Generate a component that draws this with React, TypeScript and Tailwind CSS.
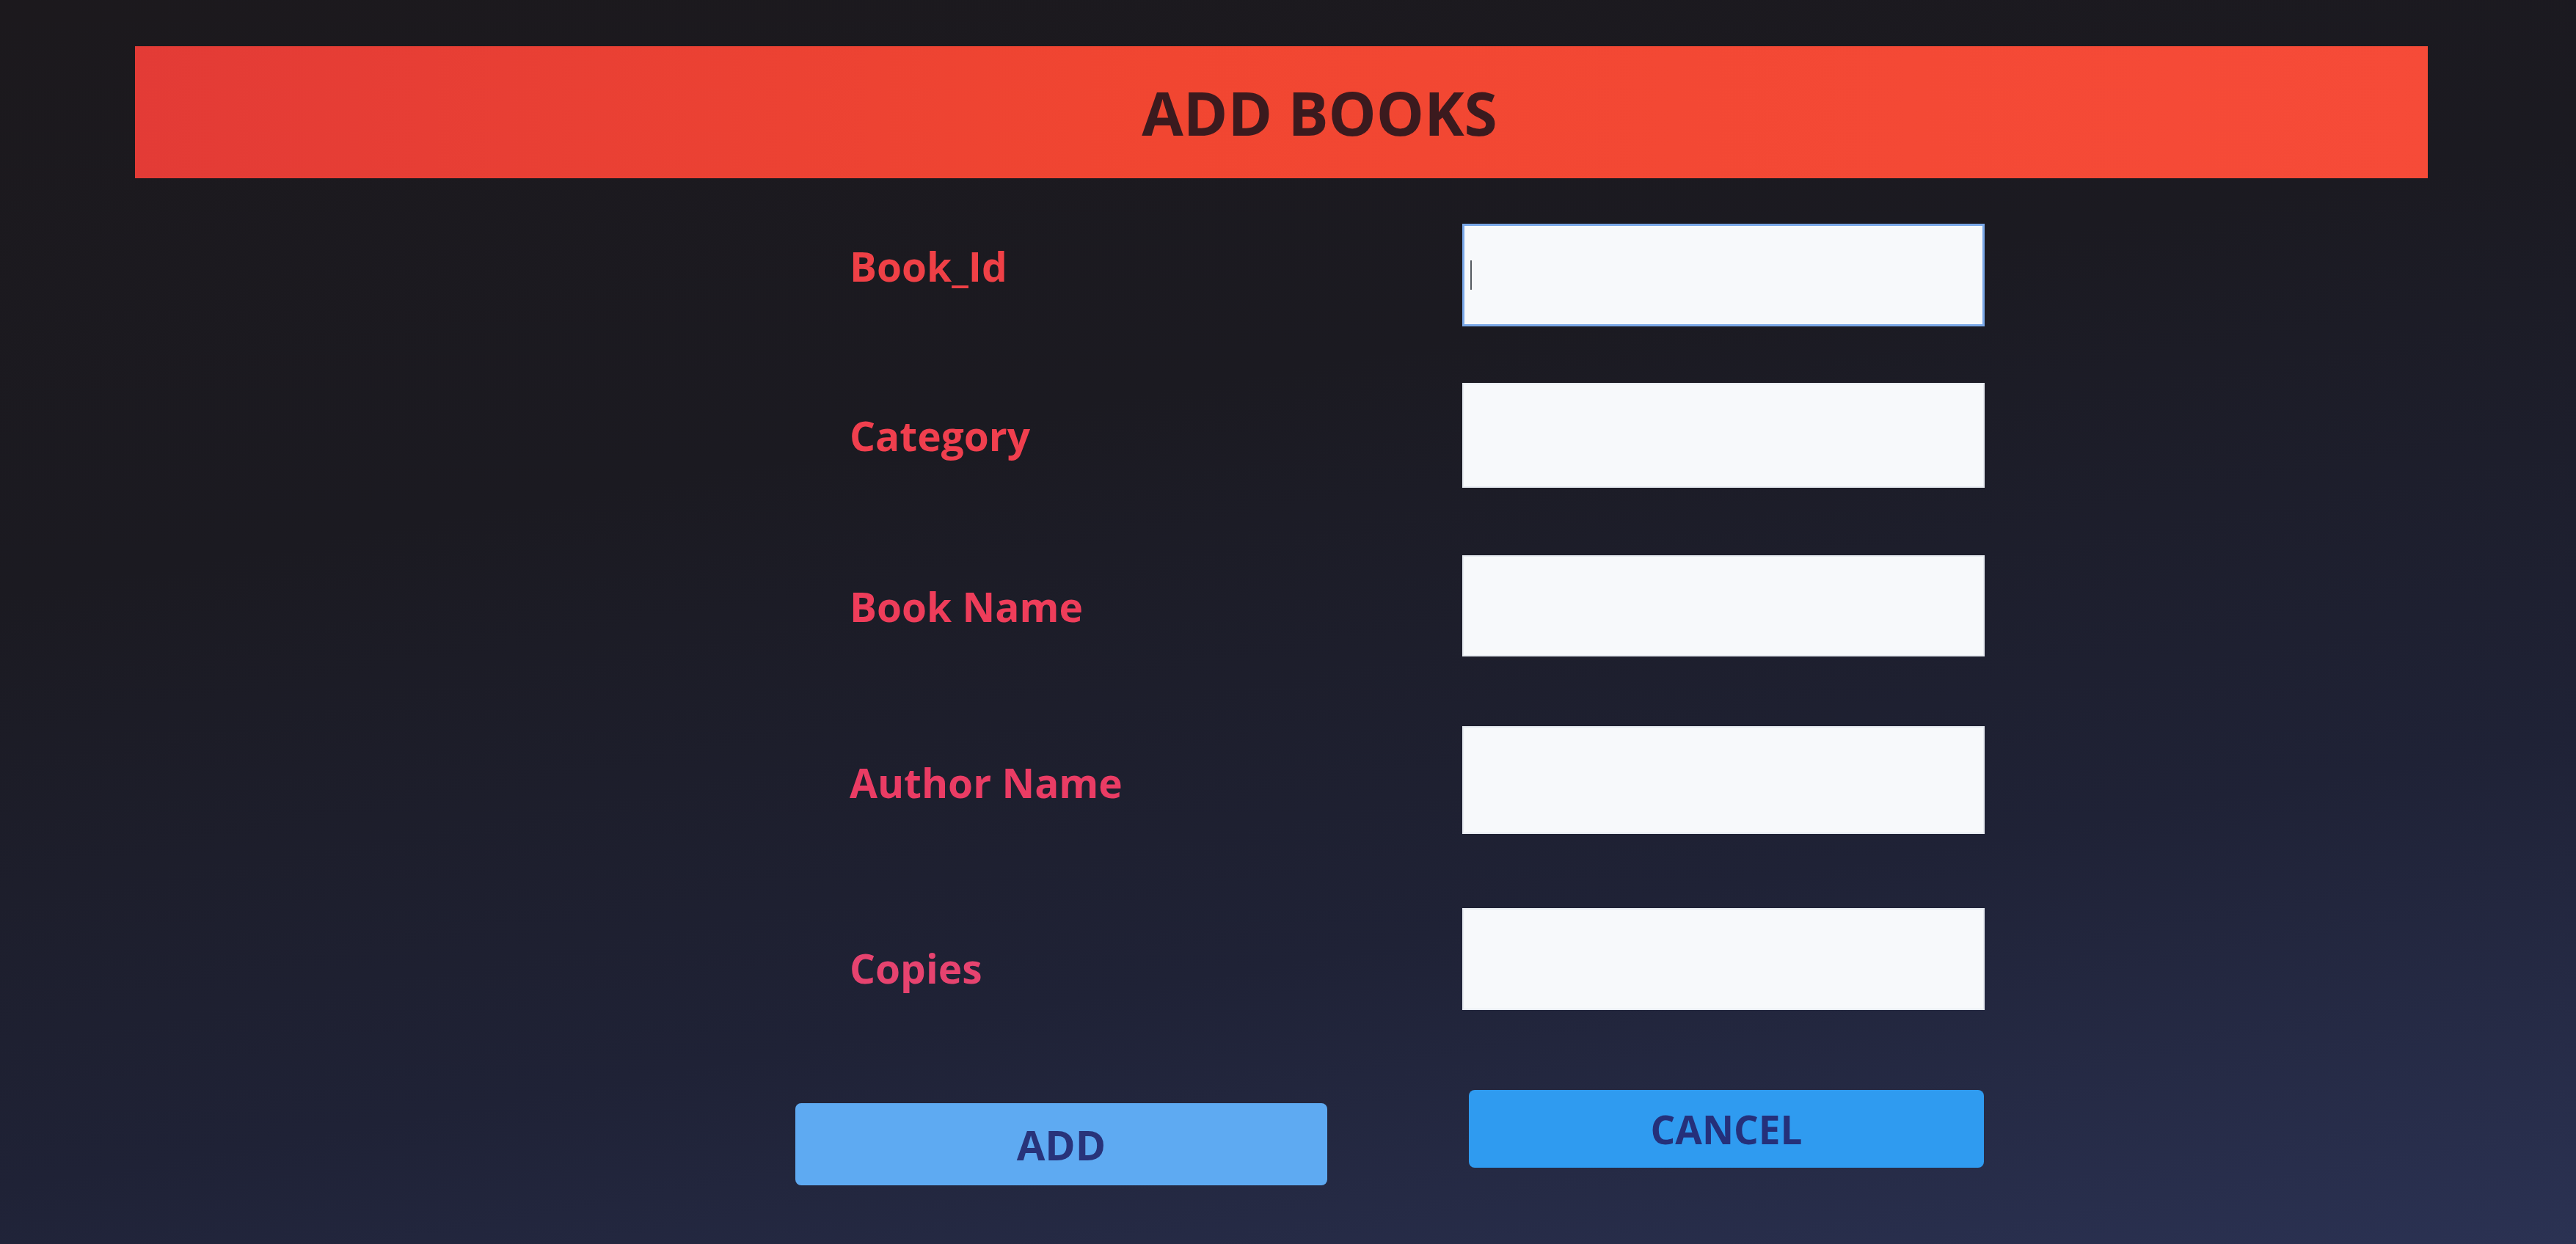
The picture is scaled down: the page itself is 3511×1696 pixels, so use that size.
import React from "react";

const rows = [
  { label: "Book_Id", color: "text-[#ef4046]", wrap: "mt-[62px]", lab: "mb-[26px]", input: "h-[140px] border-[3px] border-[#7aa8e8]", focus: true },
  { label: "Category", color: "text-[#f03f4e]", wrap: "mt-[77px]", lab: "mb-[0px]", input: "h-[143px] border-[2px] border-[#e8ecf2]", focus: false },
  { label: "Book Name", color: "text-[#ee3d5a]", wrap: "mt-[92px]", lab: "mb-[0px]", input: "h-[138px] border-[2px] border-[#e8ecf2]", focus: false },
  { label: "Author Name", color: "text-[#ea3c64]", wrap: "mt-[95px]", lab: "mt-[6px]", input: "h-[147px] border-[2px] border-[#e8ecf2]", focus: false },
  { label: "Copies", color: "text-[#e6436f]", wrap: "mt-[101px]", lab: "mt-[24px]", input: "h-[139px] border-[2px] border-[#e8ecf2]", focus: false },
];

export default function App() {
  return (
    <div
      className="w-[3511px] h-[1696px] overflow-hidden pt-[63px] bg-[linear-gradient(170deg,#1c191d_0%,#1b1a21_35%,#1f2236_70%,#2b3253_100%)]"
      style={{ fontFamily: '"Open Sans", "Noto Sans", sans-serif' }}
    >
      <div className="ml-[184px] mr-[202px] h-[180px] flex items-center justify-center pl-[104px] bg-[linear-gradient(90deg,#e33b36_0%,#f14631_45%,#f64b38_100%)]">
        <span className="text-[82px] font-bold text-[#3b1a1e] leading-none">ADD BOOKS</span>
      </div>

      <div className="flex flex-col ml-[1158px]">
        {rows.map((r) => (
          <div key={r.label} className={`flex items-center ${r.wrap}`}>
            <div className={`w-[835px] text-[55px] font-bold leading-none ${r.color} ${r.lab}`}>{r.label}</div>
            <div className={`w-[712px] bg-[#f7f9fb] flex items-center ${r.input}`}>
              {r.focus ? <div className="ml-[8px] w-[2px] h-[40px] bg-[#555a60]" /> : null}
            </div>
          </div>
        ))}
      </div>

      <div className="flex items-start ml-[1084px] mt-[109px]">
        <button className="mt-[18px] w-[725px] h-[112px] rounded-[8px] bg-[#5eaaf2] flex items-center justify-center">
          <span className="text-[56px] font-bold text-[#28337a] leading-none">ADD</span>
        </button>
        <button className="ml-[193px] w-[702px] h-[106px] rounded-[8px] bg-[#2f9bf0] flex items-center justify-center">
          <span className="text-[53px] font-bold text-[#25307a] leading-none">CANCEL</span>
        </button>
      </div>
    </div>
  );
}
